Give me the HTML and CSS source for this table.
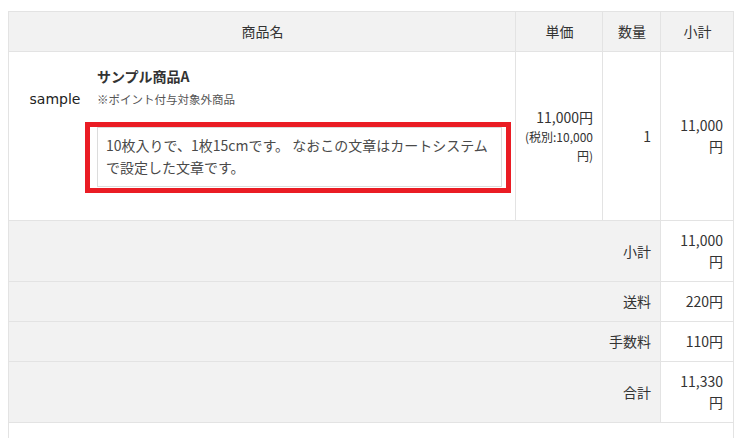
FILE: index.html
```html
<!DOCTYPE html>
<html lang="ja">
<head>
<meta charset="utf-8">
<title>カート</title>
<link rel="stylesheet" href="styles.css">
</head>
<body>
<div class="page">
<table class="cart">
  <colgroup>
    <col class="c-name"><col class="c-price"><col class="c-qty"><col class="c-sub">
  </colgroup>
  <thead>
    <tr><th>商品名</th><th>単価</th><th>数量</th><th>小計</th></tr>
  </thead>
  <tbody>
    <tr class="item">
      <td class="product">
        <div class="product-inner">
          <div class="thumb">sample</div>
          <div class="details">
            <div class="name">サンプル商品A</div>
            <div class="note">※ポイント付与対象外商品</div>
            <div class="mark">
              <div class="desc">10枚入りで、1枚15cmです。 なおこの文章はカートシステムで設定した文章です。</div>
            </div>
          </div>
        </div>
      </td>
      <td class="num price">11,000円<div class="tax"><span class="nw">(税別:10,000</span>円)</div></td>
      <td class="num qty">1</td>
      <td class="num sub">11,000円</td>
    </tr>
    <tr class="sum"><td colspan="3" class="label">小計</td><td class="num sub">11,000円</td></tr>
    <tr class="sum"><td colspan="3" class="label">送料</td><td class="num sub">220円</td></tr>
    <tr class="sum"><td colspan="3" class="label">手数料</td><td class="num sub">110円</td></tr>
    <tr class="sum"><td colspan="3" class="label">合計</td><td class="num sub">11,330円</td></tr>
    <tr class="foot"><td colspan="4"></td></tr>
  </tbody>
</table>
</div>
</body>
</html>
```
FILE: styles.css
```css
html, body {
  margin: 0;
  padding: 0;
  background: #fff;
}
body {
  font-family: "Noto Sans CJK JP", "Noto Sans", sans-serif;
  font-size: 14px;
  color: #333;
}
.page {
  padding: 11px 8px 0 8px;
}
.cart {
  width: 725px;
  border-collapse: collapse;
  table-layout: fixed;
}
.c-name { width: 507px; }
.c-price { width: 87px; }
.c-qty { width: 58px; }
.c-sub { width: 73px; }

.cart th, .cart td {
  border: 1px solid #e3e3e3;
  line-height: 21px;
  padding: 9px 9px 9px 10px;
  vertical-align: middle;
}
.cart th {
  background: #f2f2f2;
  font-weight: normal;
  text-align: center;
}
.num {
  text-align: right;
}
.sub {
  padding-left: 13px !important;
  padding-right: 10px !important;
}
.cart td.price {
  line-height: 20px;
  padding-left: 6px;
}
.tax {
  font-size: 12px;
  line-height: 19px;
}
.nw {
  white-space: nowrap;
}
.cart td.product {
  padding: 13px 10px 27px 10px;
  vertical-align: top;
}
.product-inner {
  display: flex;
  gap: 6px;
}
.thumb {
  width: 72px;
  height: 68px;
  flex: none;
  display: flex;
  align-items: center;
  justify-content: center;
  font-family: "DejaVu Sans", sans-serif;
  font-size: 14px;
  color: #222;
}
.details {
  flex: 1;
  min-width: 0;
}
.name {
  font-weight: bold;
  font-size: 14px;
  line-height: 22px;
}
.note {
  font-size: 11.5px;
  line-height: 18px;
  margin-top: 3px;
  color: #555;
}
.mark {
  margin: 14px -6px 0 -12px;
  border: 5px solid #ea1c24;
  padding: 0 4px 1px 7px;
}
.desc {
  border: 1px solid #dcdcdc;
  padding: 6px 8px 8px 8px;
  font-size: 14px;
  line-height: 22px;
  color: #4a4a4a;
}
.sum .label {
  background: #f2f2f2;
  text-align: right;
}
.foot td {
  height: 30px;
  padding: 0;
}
```
